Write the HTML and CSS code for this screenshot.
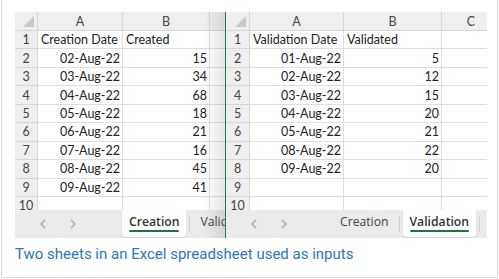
FILE: index.html
```html
<!DOCTYPE html>
<html>
<head>
<meta charset="utf-8">
<link rel="stylesheet" href="styles.css">
</head>
<body>
<div class="figure">
  <div class="shot">
    <div class="sheet sheet-left">
      <div class="grid grid-left">
        <div class="hd corner"><svg width="11" height="11" viewBox="0 0 11 11"><polygon points="11,0 11,11 0,11" fill="#c9c9c9"/></svg></div>
        <div class="hd">A</div><div class="hd">B</div><div class="hd"></div>
        <div class="rh">1</div><div class="c">Creation Date</div><div class="c">Created</div><div class="c"></div>
        <div class="rh">2</div><div class="c r">02-Aug-22</div><div class="c r">15</div><div class="c"></div>
        <div class="rh">3</div><div class="c r">03-Aug-22</div><div class="c r">34</div><div class="c"></div>
        <div class="rh">4</div><div class="c r">04-Aug-22</div><div class="c r">68</div><div class="c"></div>
        <div class="rh">5</div><div class="c r">05-Aug-22</div><div class="c r">18</div><div class="c"></div>
        <div class="rh">6</div><div class="c r">06-Aug-22</div><div class="c r">21</div><div class="c"></div>
        <div class="rh">7</div><div class="c r">07-Aug-22</div><div class="c r">16</div><div class="c"></div>
        <div class="rh">8</div><div class="c r">08-Aug-22</div><div class="c r">45</div><div class="c"></div>
        <div class="rh">9</div><div class="c r">09-Aug-22</div><div class="c r">41</div><div class="c"></div>
        <div class="rh">10</div><div class="c"></div><div class="c"></div><div class="c"></div>
      </div>
      <div class="tabbar">
        <div class="nav">
          <svg class="chev" width="6" height="10" viewBox="0 0 6 10"><polyline points="5,1 1,5 5,9" fill="none" stroke="#a6a6a6" stroke-width="1.2"/></svg>
          <svg class="chev" width="6" height="10" viewBox="0 0 6 10"><polyline points="1,1 5,5 1,9" fill="none" stroke="#a6a6a6" stroke-width="1.2"/></svg>
        </div>
        <div class="tab active">Creation</div>
        <div class="sep"></div>
        <div class="tab">Validation</div>
      </div>
      <div class="shade"></div>
    </div>
    <div class="divider"></div>
    <div class="sheet sheet-right">
      <div class="grid grid-right">
        <div class="hd corner"><svg width="11" height="11" viewBox="0 0 11 11"><polygon points="11,0 11,11 0,11" fill="#c9c9c9"/></svg></div>
        <div class="hd">A</div><div class="hd">B</div><div class="hd">C</div>
        <div class="rh">1</div><div class="c">Validation Date</div><div class="c">Validated</div><div class="c"></div>
        <div class="rh">2</div><div class="c r">01-Aug-22</div><div class="c r">5</div><div class="c"></div>
        <div class="rh">3</div><div class="c r">02-Aug-22</div><div class="c r">12</div><div class="c"></div>
        <div class="rh">4</div><div class="c r">03-Aug-22</div><div class="c r">15</div><div class="c"></div>
        <div class="rh">5</div><div class="c r">04-Aug-22</div><div class="c r">20</div><div class="c"></div>
        <div class="rh">6</div><div class="c r">05-Aug-22</div><div class="c r">21</div><div class="c"></div>
        <div class="rh">7</div><div class="c r">08-Aug-22</div><div class="c r">22</div><div class="c"></div>
        <div class="rh">8</div><div class="c r">09-Aug-22</div><div class="c r">20</div><div class="c"></div>
        <div class="rh">9</div><div class="c"></div><div class="c"></div><div class="c"></div>
        <div class="rh">10</div><div class="c"></div><div class="c"></div><div class="c"></div>
      </div>
      <div class="tabbar">
        <div class="nav">
          <svg class="chev" width="6" height="10" viewBox="0 0 6 10"><polyline points="5,1 1,5 5,9" fill="none" stroke="#a6a6a6" stroke-width="1.2"/></svg>
          <svg class="chev" width="6" height="10" viewBox="0 0 6 10"><polyline points="1,1 5,5 1,9" fill="none" stroke="#a6a6a6" stroke-width="1.2"/></svg>
        </div>
        <div class="tab">Creation</div>
        <div class="sep"></div>
        <div class="tab active">Validation</div>
        <div class="sep"></div>
      </div>
    </div>
  </div>
  <p class="caption">Two sheets in an Excel spreadsheet used as inputs</p>
</div>
</body>
</html>
```

FILE: styles.css
```css
html, body {
  margin: 0;
  padding: 0;
  background: #ffffff;
}

.figure {
  box-sizing: border-box;
  margin-left: 1px;
  width: 497px;
  height: 278px;
  border: 1px solid #d9d9d9;
  border-top: none;
  padding: 12px 0 0 13px;
}

.shot {
  display: flex;
  width: 472px;
  height: 226px;
  overflow: hidden;
}

.sheet {
  position: relative;
  display: flex;
  flex-direction: column;
  overflow: hidden;
  flex: none;
}

.sheet-left { width: 210px; }
.sheet-right { width: 261px; }

.divider {
  flex: none;
  width: 1px;
  background: #2b7a4b;
}

.grid {
  display: grid;
  grid-template-rows: 19px repeat(10, 18.44px);
  height: 198px;
  overflow: hidden;
  font-family: Lato, "Liberation Sans", sans-serif;
  font-size: 12.5px;
  color: #222;
}

.grid-left { grid-template-columns: 23px 85px 87px 60px; }
.grid-right { grid-template-columns: 24px 94px 98px 59px; }

.hd, .rh, .c {
  box-sizing: border-box;
  border-right: 1px solid #dedede;
  border-bottom: 1px solid #dedede;
  white-space: nowrap;
  overflow: hidden;
  display: flex;
  align-items: center;
}

.hd {
  background: #efefef;
  border-color: #d6d6d6;
  justify-content: center;
  color: #444;
}

.rh {
  background: #efefef;
  border-color: #d6d6d6;
  justify-content: center;
  color: #444;
}

.corner {
  justify-content: flex-end;
  align-items: flex-end;
  padding: 0 3px 3px 0;
}

.c { padding: 0 2px 0 3px; }
.c.r { justify-content: flex-end; }

.tabbar {
  flex: 1;
  display: flex;
  align-items: flex-start;
  background: #ebebeb;
  font-family: "Open Sans", "Noto Sans", sans-serif;
  font-size: 12.2px;
  color: #444;
}

.nav {
  flex: none;
  width: 107px;
  height: 28px;
  display: flex;
  align-items: center;
  padding-left: 25px;
  gap: 24px;
  box-sizing: border-box;
}

.tab {
  position: relative;
  flex: none;
  height: 27px;
  padding: 0 7px 4px;
  box-sizing: border-box;
  display: flex;
  align-items: center;
  white-space: nowrap;
}

.tab.active {
  background: #ffffff;
  font-weight: 600;
  color: #333;
  border-radius: 0 0 4px 4px;
  box-shadow: 0 1px 2px rgba(0, 0, 0, 0.12);
}

.tab.active::after {
  content: "";
  position: absolute;
  left: 7px;
  right: 7px;
  bottom: 5px;
  height: 2px;
  border-radius: 1px;
  background: #217346;
}

.sep {
  flex: none;
  width: 1px;
  height: 16px;
  margin: 6px 3px 0;
  background: #cfcfcf;
}

.shade {
  position: absolute;
  top: 0;
  right: 0;
  bottom: 0;
  width: 22px;
  background: linear-gradient(to right, rgba(0, 0, 0, 0), rgba(0, 0, 0, 0.1));
  pointer-events: none;
}

.caption {
  margin: 6px 0 0 0;
  font-family: Roboto, "Liberation Sans", sans-serif;
  font-size: 15px;
  line-height: 20px;
  color: #2a78b8;
}
```
